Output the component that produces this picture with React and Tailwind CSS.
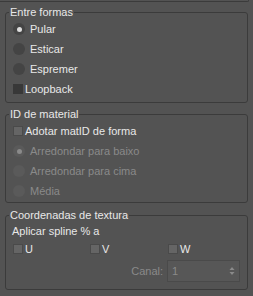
import React from "react";

const font = { fontFamily: '"Liberation Sans", Arial, sans-serif' };

function Radio({ label, checked, disabled }) {
  return (
    <div className="flex items-center h-[20px] pl-[4px]">
      <span
        className={
          "shrink-0 w-[12px] h-[12px] rounded-full flex items-center justify-center " +
          (disabled ? "bg-[#5a5a5a]" : "bg-[#444444]")
        }
      >
        {checked && (
          <span
            className={
              "w-[5px] h-[5px] rounded-full " +
              (disabled ? "bg-[#8a8a8a]" : "bg-[#dedede]")
            }
          />
        )}
      </span>
      <span
        className={
          "ml-[5px] " + (disabled ? "text-[#8a8a8a]" : "text-[#e8e8e8]")
        }
      >
        {label}
      </span>
    </div>
  );
}

function Check({ label, dark, className = "" }) {
  return (
    <div className={"flex items-center h-[20px] " + className}>
      <span
        className={
          "shrink-0 w-[10px] h-[10px] " +
          (dark
            ? "bg-[#383838]"
            : "bg-[#656565] border border-[#4a4a4a]")
        }
      />
      <span className="ml-[2px] text-[#e8e8e8]">{label}</span>
    </div>
  );
}

function Group({ title, children, className = "" }) {
  return (
    <fieldset
      className={
        "ml-[5px] w-[243px] border border-[#3b3b3b] rounded-[3px] px-[3px] " +
        className
      }
    >
      <legend className="px-[1px] text-[#e8e8e8] leading-[14px]">{title}</legend>
      {children}
    </fieldset>
  );
}

export default function App() {
  return (
    <div
      className="w-[253px] h-[296px] bg-[#535353] overflow-hidden text-[11px] leading-[14px]"
      style={font}
    >
      <div className="h-[2px] w-[249px] border-b border-r border-[#3b3b3b] rounded-br-[2px]" />

      <Group title="Entre formas" className="mt-[3px] pb-[3px]">
        <Radio label="Pular" checked />
        <Radio label="Esticar" />
        <Radio label="Espremer" />
        <Check label="Loopback" dark className="pl-[4px]" />
      </Group>

      <Group title="ID de material" className="mt-[4px] pb-[1px]">
        <div className="pl-[4px]">
          <Check label="Adotar matID de forma" />
        </div>
        <Radio label="Arredondar para baixo" checked disabled />
        <Radio label="Arredondar para cima" disabled />
        <Radio label="Média" disabled />
      </Group>

      <Group title="Coordenadas de textura" className="mt-[5px] pb-[7px]">
        <div className="h-[17px] flex items-center pl-[3px] text-[#e8e8e8]">
          Aplicar spline % a
        </div>
        <div className="flex pl-[4px]">
          <Check label="U" className="w-[77px]" />
          <Check label="V" className="w-[78px]" />
          <Check label="W" />
        </div>
        <div className="flex items-center justify-end pr-[4px] mt-[1px]">
          <span className="text-[#8a8a8a]">Canal:</span>
          <div className="ml-[4px] w-[73px] h-[22px] bg-[#575757] border border-[#4a4a4a] flex items-center pl-[4px] pr-[4px]">
            <span className="text-[#8a8a8a] flex-1">1</span>
            <svg width="6" height="10" viewBox="0 0 6 10">
              <path d="M3 1 L5.5 4 L0.5 4 Z" fill="#8a8a8a" />
              <path d="M3 9 L5.5 6 L0.5 6 Z" fill="#8a8a8a" />
            </svg>
          </div>
        </div>
      </Group>
    </div>
  );
}
